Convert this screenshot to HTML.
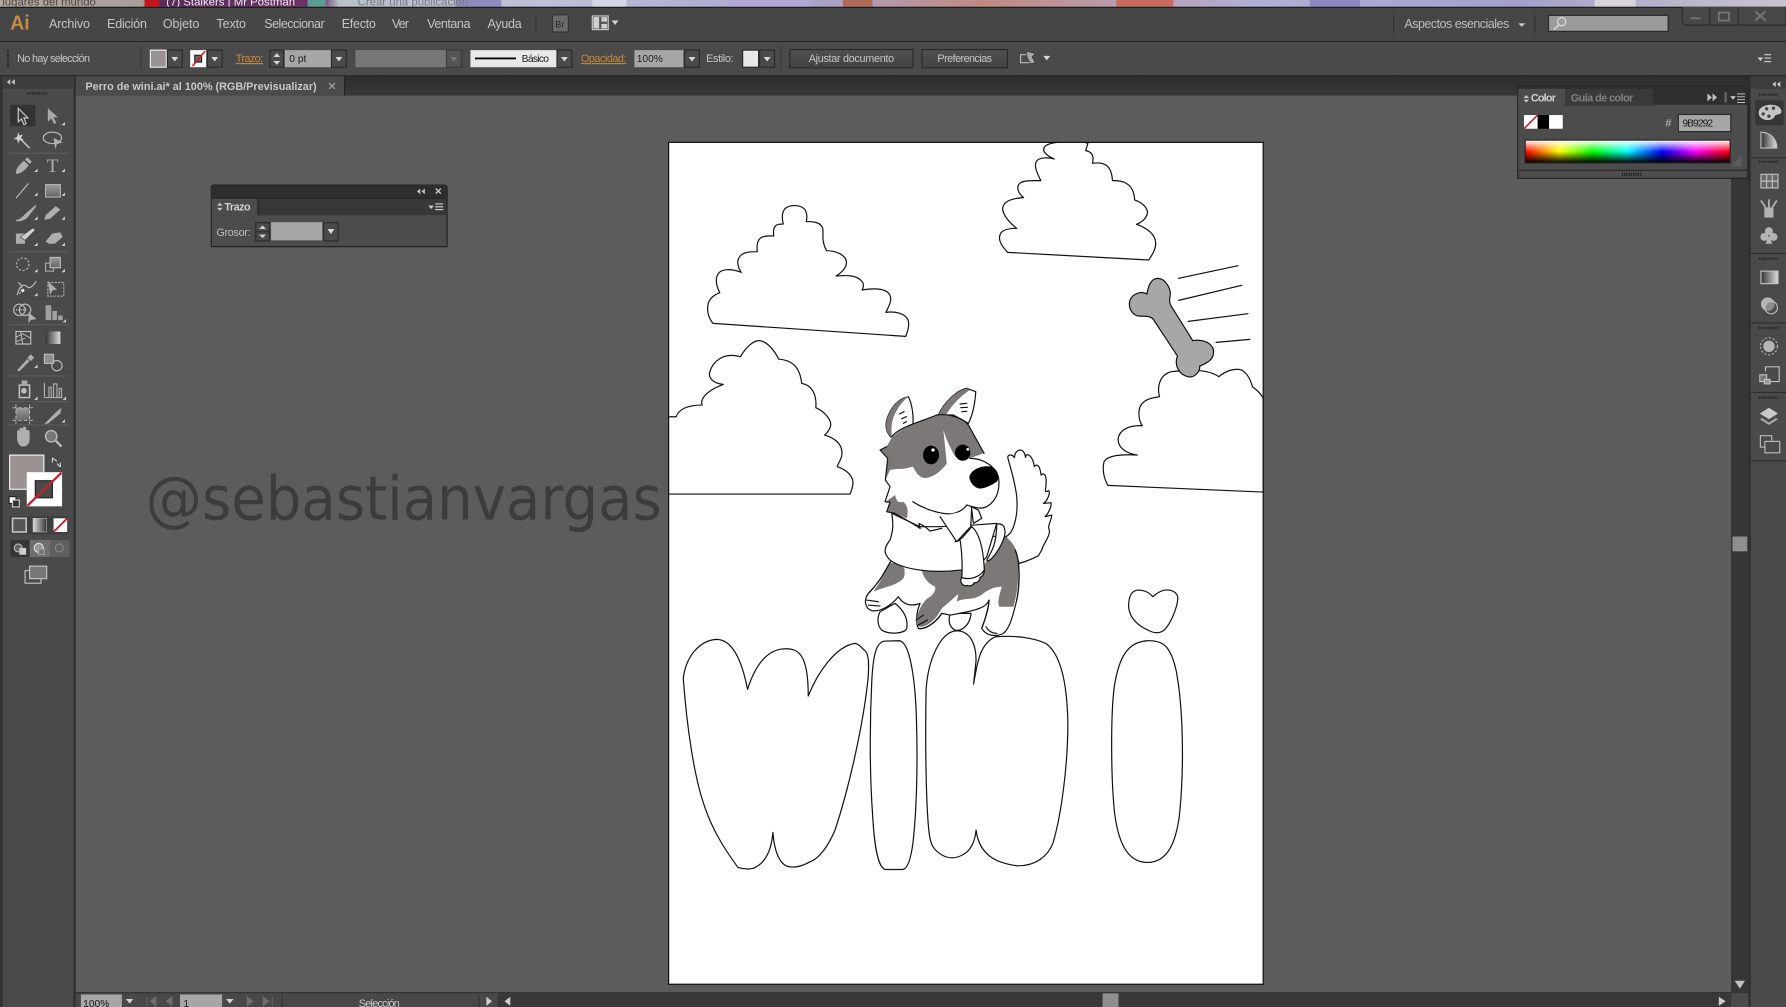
<!DOCTYPE html>
<html lang="es">
<head>
<meta charset="utf-8">
<title>Perro de wini.ai</title>
<style>
html,body{margin:0;padding:0;background:#5c5c5c;width:1786px;height:1007px;overflow:hidden}
svg{display:block}
text{font-family:"Liberation Sans","DejaVu Sans",sans-serif;fill:#c6c6c6;font-size:10px}
.m{font-size:11px;fill:#c4c4c4}
.d{fill:#1c1c1c;font-size:9px}
.o{fill:#c98a3d;font-size:9.5px;text-decoration:underline dotted}
.a path,.a ellipse,.a circle{vector-effect:non-scaling-stroke}
.ln{fill:#fff;stroke:#111;stroke-width:1.2;stroke-linejoin:round}
.wh{fill:#fff;stroke:none}
.ll{fill:none;stroke:#111;stroke-width:1.2;stroke-linecap:round;stroke-linejoin:round;vector-effect:non-scaling-stroke}
.gr{fill:#7d7878;stroke:none}
.ic{fill:none;stroke:#b4b4b4;stroke-width:1.1}
.if{fill:#aeaeae;stroke:none}
</style>
</head>
<body>
<svg xmlns="http://www.w3.org/2000/svg" width="1786" height="1007" viewBox="0 0 1568 884" preserveAspectRatio="none">
<defs>
<linearGradient id="top" x1="0" x2="1" y1="0" y2="0">
<stop offset="0" stop-color="#b3a79f"/><stop offset=".08" stop-color="#a89d9a"/><stop offset=".085" stop-color="#5b2b5d"/><stop offset=".18" stop-color="#6d3366"/><stop offset=".19" stop-color="#b7c2c8"/><stop offset=".3" stop-color="#c1bfd8"/><stop offset=".45" stop-color="#a9a4cf"/><stop offset=".55" stop-color="#c08a80"/><stop offset=".7" stop-color="#b2aed4"/><stop offset=".85" stop-color="#a5a0c8"/><stop offset="1" stop-color="#c8c4d0"/>
</linearGradient>
<linearGradient id="tabbar" x1="0" x2="0" y1="0" y2="1"><stop offset="0" stop-color="#2c2c2c"/><stop offset="1" stop-color="#383838"/></linearGradient>
<linearGradient id="btn" x1="0" x2="0" y1="0" y2="1"><stop offset="0" stop-color="#505050"/><stop offset="1" stop-color="#434343"/></linearGradient>
<linearGradient id="rain" x1="0" x2="1" y1="0" y2="0">
<stop offset="0" stop-color="#f00"/><stop offset=".17" stop-color="#ff0"/><stop offset=".33" stop-color="#0f0"/><stop offset=".5" stop-color="#0ff"/><stop offset=".67" stop-color="#00f"/><stop offset=".83" stop-color="#f0f"/><stop offset="1" stop-color="#f00"/>
</linearGradient>
<linearGradient id="shade" x1="0" x2="0" y1="0" y2="1">
<stop offset="0" stop-color="#fff"/><stop offset=".5" stop-color="#fff" stop-opacity="0"/><stop offset=".5" stop-color="#000" stop-opacity="0"/><stop offset="1" stop-color="#000"/>
</linearGradient>
<linearGradient id="gg" x1="0" x2="1" y1="0" y2="0"><stop offset="0" stop-color="#333"/><stop offset="1" stop-color="#ddd"/></linearGradient>
<linearGradient id="gv" x1="0" x2="0" y1="0" y2="1"><stop offset="0" stop-color="#9a9a9a"/><stop offset="1" stop-color="#666"/></linearGradient>
<path id="c" d="M0 0L-3 0L0-3Z" fill="#cfcfcf"/>
<g id="dd"><rect x="0" y="0" width="13" height="15" fill="#4a4a4a" stroke="#2a2a2a"/><path d="M3.5 6H9.5L6.5 10Z" fill="#d8d8d8"/></g>
<clipPath id="ab"><rect x="587" y="125" width="522" height="739"/></clipPath>
</defs>

<!-- base -->
<rect width="1568" height="884" fill="#5c5c5c"/>
<!-- browser strip -->
<rect width="1568" height="6" fill="url(#top)"/>
<rect x="127" y="0" width="13" height="6" fill="#c4161c"/>
<rect x="270" y="0" width="16" height="6" fill="#5c9a92"/>
<rect x="400" y="0" width="40" height="6" fill="#8f8cc0"/><rect x="520" y="0" width="30" height="6" fill="#d6d6e6"/>
<rect x="640" y="0" width="70" height="6" fill="#b0a6d6"/><rect x="740" y="0" width="26" height="6" fill="#b06a58"/><rect x="980" y="0" width="50" height="6" fill="#c96a60"/><rect x="1150" y="0" width="44" height="6" fill="#8d88bd"/><rect x="1400" y="0" width="36" height="6" fill="#d8d4dc"/>
<text x="2" y="5" style="font-size:10px;fill:#4d4640">lugares del mundo</text>
<text x="146" y="5" style="font-size:10px;fill:#eee">(7) Stalkers | Mr Postman</text>
<text x="314" y="5" style="font-size:10px;fill:#777a80">Crear una publicación</text>

<!-- menu bar -->
<rect y="6" width="1568" height="30" fill="#464646"/>
<rect y="6" width="1568" height="1" fill="#1d1d1d"/>
<rect y="36" width="1568" height="1" fill="#262626"/>
<text x="9" y="26" style="font-size:18px;font-weight:bold;fill:#c58c3e" textLength="17" lengthAdjust="spacingAndGlyphs">Ai</text>
<text class="m" x="43" y="24.5" textLength="36">Archivo</text>
<text class="m" x="94" y="24.5" textLength="35">Edición</text>
<text class="m" x="143" y="24.5" textLength="32">Objeto</text>
<text class="m" x="190" y="24.5" textLength="26">Texto</text>
<text class="m" x="232" y="24.5" textLength="53">Seleccionar</text>
<text class="m" x="300" y="24.5" textLength="30">Efecto</text>
<text class="m" x="344" y="24.5" textLength="15">Ver</text>
<text class="m" x="375" y="24.5" textLength="38">Ventana</text>
<text class="m" x="428" y="24.5" textLength="30">Ayuda</text>
<rect x="470" y="12" width="1" height="18" fill="#333"/>
<rect x="485" y="13" width="14" height="15" rx="1" fill="#6a6a6a" stroke="#333"/>
<text x="487.5" y="24" style="font-size:8px;fill:#2a2a2a">Br</text>
<rect x="520" y="14" width="14" height="12" fill="#555" stroke="#c8c8c8"/>
<rect x="521" y="15" width="5" height="10" fill="#cfcfcf"/><rect x="528" y="15" width="5" height="4" fill="#cfcfcf"/><rect x="528" y="21" width="5" height="4" fill="#cfcfcf"/>
<path d="M537 18H543L540 22Z" fill="#d4d4d4"/>
<rect x="1223" y="12" width="1" height="18" fill="#333"/>
<text class="m" x="1233" y="24.5" textLength="92" style="fill:#bdbdbd">Aspectos esenciales</text>
<path d="M1333 20.500H1339L1336 23.500Z" fill="#cfcfcf"/>
<rect x="1347" y="12" width="1" height="18" fill="#333"/>
<rect x="1359.500" y="13.500" width="105" height="14" fill="#9b9b9b" stroke="#2a2a2a"/>
<circle cx="1371" cy="19" r="3.600" fill="none" stroke="#e0e0e0"/><path d="M1368.500 22L1364 26" stroke="#e0e0e0" stroke-width="1.200"/>
<path d="M1477 6V18Q1477 22 1481 22H1568V6" fill="#474747" stroke="#2a2a2a"/>
<path d="M1501 6V22M1526 6V22" stroke="#2a2a2a"/>
<rect x="1484" y="15" width="9" height="2" fill="#6c6c6c"/>
<rect x="1509" y="11" width="9" height="7" fill="none" stroke="#7a7a7a" stroke-width="1.500"/>
<path d="M1541 10L1550 18M1550 10L1541 18" stroke="#707070" stroke-width="2"/>

<!-- control bar -->
<rect y="37" width="1568" height="29" fill="#4a4a4a"/>
<rect y="66" width="1568" height="1" fill="#232323"/>
<path d="M7 44V60" stroke="#222" stroke-width="2" stroke-dasharray="1 1"/>
<text x="15" y="54.500" style="font-size:9.500px" textLength="64">No hay selección</text>
<rect x="123" y="41" width="1" height="20" fill="#3b3b3b"/>
<rect x="132" y="44" width="14" height="15" fill="#9b9292" stroke="#eee"/>
<use href="#dd" x="147" y="44"/>
<rect x="167" y="44" width="14" height="15" fill="#fff"/>
<rect x="171" y="48.500" width="6" height="6" fill="#666" stroke="#222"/>
<path d="M169 58L180 45" stroke="#c8202a" stroke-width="1.400"/>
<use href="#dd" x="182" y="44"/>
<text class="o" x="207" y="54.500" textLength="24">Trazo:</text>
<rect x="237" y="44" width="12" height="15" fill="#4a4a4a" stroke="#2a2a2a"/>
<path d="M240 50L243 46.500L246 50ZM240 53.500H246L243 57Z" fill="#d4d4d4"/>
<rect x="250" y="44" width="41" height="15" fill="#a6a6a6"/>
<text class="d" x="254" y="54.500">0 pt</text>
<use href="#dd" x="291" y="44"/>
<rect x="312" y="44" width="80" height="15" fill="#777"/>
<rect x="392" y="44" width="13" height="15" fill="#555" stroke="#3a3a3a"/><path d="M395.500 50H401.500L398.500 54Z" fill="#777"/>
<rect x="413" y="44" width="76" height="15" fill="#e9e9e9"/>
<rect x="417" y="50.500" width="36" height="1.600" fill="#000"/>
<text class="d" x="458" y="54.500" textLength="24">Básico</text>
<use href="#dd" x="489" y="44"/>
<text class="o" x="510" y="54.500" textLength="40">Opacidad:</text>
<rect x="557" y="44" width="43" height="15" fill="#a6a6a6"/>
<text class="d" x="559" y="54.500">100%</text>
<use href="#dd" x="601" y="44"/>
<text x="620" y="54.500" style="font-size:9.500px" textLength="24">Estilo:</text>
<rect x="652" y="44" width="14" height="15" fill="#e8e8e8" stroke="#2a2a2a"/>
<use href="#dd" x="667" y="44"/>
<rect x="685" y="41" width="1" height="20" fill="#3b3b3b"/>
<rect x="693.500" y="43.500" width="108" height="16" fill="url(#btn)" stroke="#2a2a2a"/>
<text x="710" y="54.500" style="font-size:9.500px" textLength="75">Ajustar documento</text>
<rect x="809.500" y="43.500" width="75" height="16" fill="url(#btn)" stroke="#2a2a2a"/>
<text x="823" y="54.500" style="font-size:9.500px" textLength="48">Preferencias</text>
<path d="M896 48H904V55H896Z" fill="none" stroke="#b8b8b8"/><path d="M901 45L909 47L906 50L909 55L905 56L902 51Z" fill="#a8a8a8" stroke="#2a2a2a" stroke-width=".5"/>
<path d="M916 49H922L919 53Z" fill="#d8d8d8"/>
<path d="M1543 50.500H1548L1545.500 53.500Z" fill="#cfcfcf"/><path d="M1549 48H1555M1549 51H1555M1549 54H1555" stroke="#cfcfcf"/>

<!-- doc tab bar -->
<rect y="67" width="1568" height="17" fill="url(#tabbar)"/>
<rect x="66" y="67" width="236" height="17" fill="#4b4b4b"/>
<rect x="302" y="67" width="1" height="17" fill="#222"/>
<text x="75" y="79" style="font-size:10px;font-weight:bold;fill:#c8c8c8" textLength="203" lengthAdjust="spacingAndGlyphs">Perro de wini.ai* al 100% (RGB/Previsualizar)</text>
<path d="M289 73L294 78M294 73L289 78" stroke="#aaa" stroke-width="1"/>

<!-- canvas -->
<rect x="66" y="84" width="1454" height="788" fill="#5c5c5c"/>

<!-- watermark -->
<text x="128" y="456" style="font-family:'DejaVu Sans','Liberation Sans',sans-serif;font-size:53px;fill:#3c3c3c" textLength="453" lengthAdjust="spacingAndGlyphs">@sebastianvargas</text>

<!-- artboard -->
<rect x="587" y="125" width="522" height="739" fill="#fff"/>

<g class="a" clip-path="url(#ab)">
<g transform="translate(579.5,114.1) scale(.336,.2927)">
<path class="ln" d="M138 580C128 565 122 545 125 525C128 505 140 495 156 488C148 470 144 450 150 435C158 415 185 415 212 427C205 415 198 395 208 380C218 365 235 365 254 365C252 345 255 325 270 320C280 316 290 318 297 318C295 300 298 285 310 283L322 282C318 265 318 250 325 238C335 224 365 222 378 238C385 250 384 265 382 275C395 274 420 275 425 295C428 310 420 330 435 362C460 362 485 375 487 395C488 410 478 425 460 438C490 435 515 435 528 455C535 465 530 475 528 480C555 475 595 472 602 500C605 515 597 530 590 547C615 543 640 550 648 570C652 585 648 600 642 619Z"/>
<path class="ln" d="M908 367C895 350 880 330 890 310C897 297 915 295 932 295C915 280 895 255 895 235C897 215 915 205 950 203C935 190 930 170 940 160C950 150 975 152 995 152C985 130 975 105 985 92C992 82 1015 82 1030 87C1015 80 995 65 1005 50C1015 38 1040 36 1070 35C1090 35 1110 35 1118 40L1112 62C1125 65 1135 72 1130 100C1160 95 1180 105 1182 152C1215 150 1238 165 1240 210C1265 220 1278 240 1272 255C1268 268 1255 278 1245 283C1275 295 1295 315 1295 340C1295 360 1285 375 1277 390Z"/>
<path class="ln" d="M22 860L42 860C50 835 75 825 110 825C105 810 115 785 165 763C140 760 125 745 130 725C138 695 165 665 210 680C225 650 245 630 262 632C285 638 300 665 310 687C340 690 365 705 370 760C395 765 410 790 407 833C430 845 450 870 445 890C440 905 435 910 430 915C460 925 478 945 475 975C473 990 465 1000 463 1010C490 1020 505 1040 504 1060C503 1075 498 1085 497 1092L22 1092Z"/>
<path class="ln" d="M1170 1066C1160 1045 1155 1020 1160 995C1170 975 1210 972 1247 975C1215 970 1195 950 1197 925C1200 900 1225 885 1260 887C1250 870 1245 830 1265 815C1275 805 1290 803 1305 800C1298 770 1305 735 1335 725C1375 720 1430 715 1460 740C1475 725 1500 712 1520 720C1540 735 1545 760 1548 770C1560 780 1570 790 1576 805L1576 1086Z"/>
<path d="M1300 445C1320 445 1335 475 1333 495C1330 515 1330 520 1342 540L1392 632C1410 628 1435 632 1445 655C1450 680 1440 695 1410 708C1412 725 1395 745 1380 740C1358 735 1345 710 1350 685L1352 678L1290 570C1282 555 1265 560 1250 558C1232 555 1222 530 1228 510C1235 490 1258 482 1272 492C1275 475 1280 445 1300 445Z" fill="#a7a7a7" stroke="#111" stroke-width="1.200"/>
<path class="ll" d="M1355 445L1510 407M1355 511L1520 466M1380 574L1536 551M1453 637L1541 628"/>
</g>

<g transform="translate(579.5,509.2) scale(.3135,.2927)">
<path class="ln" d="M218 862C190 820 150 760 125 680C95 590 75 440 65 295C72 230 110 180 160 178C200 180 228 235 245 328C262 270 290 215 340 207C390 200 415 225 415 348C440 280 490 200 545 190C560 192 565 205 572 210C585 220 585 250 583 290C570 430 530 620 490 750C470 800 445 835 420 845C395 860 375 865 355 858C335 850 320 815 316 757C312 810 295 850 260 865C245 868 230 866 218 862Z"/>
<path class="ln" d="M630 183L670 182C700 185 715 300 718 420C722 560 718 700 708 790C703 830 695 865 680 868L630 868C610 860 600 800 595 700C588 600 586 450 593 300C597 225 605 185 630 183Z"/>
<path class="ln" d="M745 330C750 240 785 155 830 152C870 152 885 195 885 240L878 312C888 250 895 190 940 170C1000 165 1050 175 1080 190C1120 220 1140 300 1142 430C1142 550 1125 700 1100 790C1085 830 1050 858 1000 857C955 850 895 835 885 750C882 780 875 800 860 815C840 832 815 840 790 825C770 812 760 800 755 770C745 700 742 500 745 330Z"/>
<path class="ln" d="M1365 182C1410 180 1430 200 1445 270C1465 380 1468 560 1455 700C1445 790 1420 847 1365 847C1315 847 1285 800 1273 700C1262 590 1262 400 1272 320C1285 230 1310 185 1365 182Z"/>
<path class="ln" d="M1380 50C1395 35 1410 28 1425 30C1440 32 1450 42 1450 55C1448 85 1430 130 1412 150C1400 160 1385 160 1370 152C1340 138 1315 115 1312 80C1312 50 1320 30 1340 30C1355 30 1370 38 1380 50Z"/>
</g>

<!-- dog -->
<g transform="translate(737.5,324.8) scale(.2927)">
<!-- tail -->
<path class="ln" d="M497 500C520 490 535 440 530 380C525 335 510 290 503 262C505 250 518 255 523 262C525 240 545 232 553 250C558 260 555 270 558 255C570 250 580 270 583 290C592 278 600 290 603 315C610 308 620 312 618 340C618 360 610 370 626 362C632 370 620 395 610 400L633 398C635 410 625 430 615 440L635 435C635 450 620 470 628 480C630 500 610 520 605 540L595 557C580 565 555 575 538 580Z"/>
<!-- back paws -->
<path class="ln" d="M165 700C190 720 205 745 200 775C195 790 150 795 125 780C110 765 112 740 120 725Z"/>
<path class="ln" d="M330 730C325 750 325 770 345 780C365 785 390 765 393 730Z"/>
<!-- body -->
<path class="ln" d="M155 570C135 600 125 630 85 670C70 690 75 715 95 722C120 725 150 710 175 680C190 705 215 710 240 700C230 725 225 755 235 775C255 780 290 755 305 730L330 735C420 720 440 710 447 690C445 725 430 760 425 775C440 800 470 800 490 790C510 775 520 730 530 690C540 640 540 570 525 540C510 510 495 500 480 495Z"/>
<path class="gr" d="M150 580C135 605 125 630 100 665C130 650 165 650 190 625C198 610 190 595 195 600L180 575Z"/>
<path class="gr" d="M245 600C250 625 265 640 285 650C290 665 270 680 270 680C250 690 235 720 228 750C230 770 240 775 260 765C280 755 295 735 305 715C330 695 345 680 355 672L350 695C375 680 400 695 430 670C455 650 480 650 485 650C480 670 470 695 478 710L520 710C535 660 540 590 528 540C515 510 500 500 480 498L430 590L360 600Z"/>
<path class="ll" d="M530 690C540 640 540 570 525 540M228 750L250 735M235 765L262 750M80 690L115 695M85 705L120 708M438 770C445 785 460 790 470 790M447 690C445 725 430 760 425 775M305 730C285 760 255 780 235 775M155 570C135 600 125 630 85 670"/>
<!-- chest -->
<path class="ln" d="M155 430C160 460 160 480 150 510C130 535 130 550 150 570C190 600 280 610 360 600L405 600L440 560L470 460L400 465L300 470L240 470Z"/>
<!-- right frill -->
<path class="ln" d="M440 570C455 545 470 520 470 462C485 460 495 465 495 490C490 520 465 560 445 573Z"/>
<!-- scarf -->
<path class="ln" d="M345 515L365 505L395 470C420 490 430 540 433 600C420 620 390 640 365 625C368 590 365 540 360 510Z"/>
<path class="ln" d="M362 630C362 642 372 650 382 646C388 650 400 646 402 638C410 640 420 632 420 622C428 620 433 610 433 600C420 620 390 632 365 622Z"/>
<!-- ears -->
<path class="ln" d="M155 203C140 190 135 170 140 150C150 115 175 85 205 80C215 100 222 135 218 170C205 170 190 180 175 200C170 205 160 205 155 203Z"/>
<path class="gr" d="M155 203C140 190 135 170 140 150C150 115 175 85 205 80C185 95 165 125 158 150C152 170 155 190 155 203Z"/>
<path class="ln" d="M295 135C310 100 350 60 380 55L407 65C405 100 400 130 385 160L340 135Z"/>
<path class="gr" d="M295 135C310 100 350 60 380 55L390 60C365 75 335 105 318 135Z"/>
<path class="ll" d="M178 132L192 125M185 146L199 140M190 160L199 155M360 102L380 100M362 113L382 112M365 125L380 124"/>
<!-- head -->
<path class="wh" d="M155 200C180 170 230 160 290 135C330 130 370 145 385 165L432 250L390 265C420 265 460 280 475 320C480 350 475 390 440 410C420 420 400 410 380 405C360 425 320 435 290 425L220 395L205 440L165 430L140 425L150 395L135 395L150 350L135 330L145 265L120 240L140 230Z"/>
<path class="gr" d="M155 203C190 170 240 150 292 135C330 130 370 145 385 165L430 250L388 265C360 270 350 260 345 260C335 240 320 215 310 180C315 230 320 275 320 280C300 310 265 330 245 322C230 315 225 300 218 290C190 300 170 295 150 300L136 330L145 265L122 240L140 230Z"/>
<path class="gr" d="M137 395L165 375C170 395 175 400 190 395C205 410 205 425 200 445L165 430L142 425L150 397Z"/>
<path class="ll" d="M155 200C180 170 230 160 290 135C330 130 370 145 385 165L432 250M390 265C420 265 460 280 475 320C480 350 475 390 440 410C420 420 400 410 380 405M140 230L120 240L143 265L136 330L150 350L135 395L150 397L140 425L165 430"/>
<path class="ll" d="M218 395C250 415 290 430 330 432C350 430 370 420 380 405"/>
<!-- bib under chin -->
<path class="wh" d="M300 436L350 515L392 470L395 410C370 425 335 435 300 436Z"/>
<path class="ll" d="M300 440L350 515L392 470L395 410"/>
<path class="ln" d="M394 410L400 460L425 445L415 420Z"/>
<path class="ll" d="M165 430C200 450 225 465 240 475L237 460L255 470L270 483L305 475"/>
<!-- eyes and nose -->
<ellipse cx="273" cy="255" rx="24" ry="28" fill="#000"/>
<ellipse cx="368" cy="248" rx="23" ry="24" fill="#000"/>
<circle cx="279" cy="240" r="5" fill="#fff"/>
<circle cx="383" cy="238" r="4" fill="#fff"/>
<path d="M388 320C395 295 430 285 455 290C475 300 480 325 470 335C455 345 430 358 415 355C400 350 388 335 388 320Z" fill="#000"/>
</g>
</g>
<rect x="587" y="125" width="522" height="739" fill="none" stroke="#0a0a0a" stroke-width="1"/>

<!-- left tools -->
<rect x="0" y="67" width="65" height="817" fill="#4a4a4a"/>
<rect x="0" y="67" width="2.500" height="817" fill="#333"/>
<rect x="64.500" y="67" width="2" height="817" fill="#2e2e2e"/>
<rect x="3" y="67" width="61" height="11" fill="#3d3d3d"/>
<path d="M6 72L9 69.500V74.500ZM10 72L13 69.500V74.500Z" fill="#c8c8c8"/>
<path d="M24 82H42" stroke="#222" stroke-width="2" stroke-dasharray="1 1"/>
<path d="M8 134.500H60M8 221H60M8 285H60M8 330H60M8 352.500H60M8 373H60" stroke="#5c5c5c" stroke-width="1"/>
<rect x="9" y="92" width="22" height="19" fill="#333"/>
<!-- row 1 -->
<path d="M16 95V107L18.800 104.500L21 109.500L23 108.500L21 103.500L24.500 103.500Z" fill="#3a3a3a" stroke="#cfcfcf"/>
<path d="M42 95V107L45 104L47.500 109L49.500 108L47 103H51Z" fill="#a8a8a8"/>
<use href="#c" x="57" y="110"/>
<!-- row 2 -->
<path d="M18 122L26 130" stroke="#b8b8b8" stroke-width="1.500"/><path d="M16 116L17 119L20 118L18.500 121L21 123L17.500 122.500L16 126L15 122.500L12 122L15 120Z" fill="#cfcfcf"/>
<ellipse cx="46" cy="121" rx="8" ry="5" class="ic"/><path d="M47 121L55 125L50 126.500L48.500 131Z" fill="#aeaeae"/>
<!-- row 3 -->
<path d="M14 152C14 147 18 144 21 141L25 145C23 149 20 151 15 153ZM22 140L24 138L28 142L26 144Z" class="if"/><use href="#c" x="33" y="151"/>
<text x="41" y="151" style="font-family:'Liberation Serif',serif;font-size:17px;fill:#b0b0b0">T</text><use href="#c" x="57" y="151"/>
<!-- row 4 -->
<path d="M14 174L25 161" stroke="#bcbcbc" stroke-width="1"/><use href="#c" x="33" y="172"/>
<rect x="40" y="162" width="13" height="11" fill="url(#gv)" stroke="#b0b0b0"/><use href="#c" x="57" y="172"/>
<!-- row 5 -->
<path d="M14 193C17 193 19 191 21 189L31 180L32 181L24 191C22 193 18 195 14 194Z" class="if"/><use href="#c" x="33" y="193"/>
<path d="M39 193L40 189L49 181L53 184L44 192Z" class="if"/><use href="#c" x="57" y="193"/>
<!-- row 6 -->
<path d="M14 205H22V214H14Z" class="if"/><path d="M18 208L29 200L31 202L22 211Z" fill="#cfcfcf" stroke="#333" stroke-width=".5"/>
<path d="M40 212L46 205L53 204L55 208L48 214H43Z" class="if"/><use href="#c" x="57" y="216"/><use href="#c" x="33" y="216"/>
<!-- row 7 -->
<circle cx="20" cy="232" r="5.500" fill="none" stroke="#aaa" stroke-width="1.100" stroke-dasharray="2 1.400"/><use href="#c" x="33" y="239"/>
<rect x="40" y="231" width="7" height="7" fill="none" stroke="#aaa"/><rect x="44" y="226" width="9" height="9" fill="url(#gv)" stroke="#bbb"/><use href="#c" x="57" y="239"/>
<!-- row 8 -->
<path d="M15 259C17 252 20 248 24 252C27 254 30 249 32 247M16 248C20 250 20 254 17 258" class="ic"/><circle cx="20" cy="255" r="2" fill="#ddd" stroke="#444"/><use href="#c" x="33" y="260"/>
<rect x="42" y="248" width="14" height="12" fill="none" stroke="#aaa" stroke-dasharray="2 1"/><path d="M42 247L50 254L46 255L44 259Z" class="if"/>
<!-- row 9 -->
<circle cx="17" cy="272" r="5" class="ic"/><circle cx="22" cy="272" r="5" class="ic"/><path d="M14 272H24" stroke="#ddd" stroke-dasharray="1 1"/><path d="M25 274L32 280L27 281L25 284Z" class="if"/>
<path d="M40 268H45V281H40ZM46 273H50V281H46ZM51 277H55V281H51Z" fill="#a0a0a0"/><use href="#c" x="58" y="283"/>
<!-- row 10 -->
<rect x="14" y="291" width="13" height="11" fill="none" stroke="#c0c0c0"/><path d="M14 296L20 293L27 297M18 291L20 302M14 300L22 297" stroke="#c0c0c0" fill="none" stroke-width=".8"/>
<rect x="40" y="291" width="13" height="11" fill="url(#gg)"/>
<!-- row 11 -->
<path d="M15 325L24 315L26 317L17 326ZM24 314L27 311L30 314L27 317Z" class="if"/><use href="#c" x="33" y="323"/>
<rect x="39" y="311" width="8" height="8" fill="#8f8f8f" stroke="#bbb"/><circle cx="50" cy="321" r="4.500" class="ic"/>
<!-- row 12 -->
<rect x="17" y="338" width="9" height="11" fill="none" stroke="#c0c0c0" stroke-width="1.300"/><rect x="19" y="334" width="5" height="4" fill="#aaa"/><circle cx="21" cy="343" r="2.500" fill="#bbb"/><use href="#c" x="33" y="351"/>
<path d="M39 349V336M43 349V340H45V349M47 349V337H50V349M52 349V341H54V349M39 349H55" fill="none" stroke="#adadad"/><use href="#c" x="58" y="351"/>
<!-- row 13 -->
<rect x="14" y="358" width="12" height="11" fill="url(#gv)"/><path d="M11 358H29M11 369H29M14 355V372M26 355V372" stroke="#c4c4c4" stroke-width=".8" stroke-dasharray="3 2"/>
<path d="M39 372L50 361L54 358L53 363L42 372Z" class="if"/><use href="#c" x="57" y="371"/>
<!-- row 14 -->
<path d="M15 386V379C15 377 17 377 17 379V377C17 375 20 375 20 377V376C20 374 23 374 23 376V378C23 377 26 377 26 379V386C26 390 23 392 20 392C18 392 16 390 15 386Z" fill="#b0b0b0"/>
<circle cx="45" cy="383" r="5" fill="#777" stroke="#bcbcbc" stroke-width="1.200"/><path d="M49 387L54 392" stroke="#bcbcbc" stroke-width="2"/>
<!-- fill/stroke -->
<rect x="8.500" y="399.500" width="30" height="30" fill="#9b9292" stroke="#f4f4f4" stroke-width="1"/>
<rect x="23.500" y="414.500" width="31" height="30" fill="#fff"/>
<rect x="31" y="422" width="15" height="15" fill="#4a4a4a" stroke="#222"/>
<path d="M24 444L54 415" stroke="#c8202a" stroke-width="2"/>
<path d="M46 402L50 405M53 410L50 407M46 402V406M53 410V406" stroke="#d0d0d0" fill="none"/>
<rect x="8" y="436" width="6" height="6" fill="#fff" stroke="#222"/><rect x="11" y="439" width="6" height="6" fill="#333" stroke="#ccc"/>
<!-- color/gradient/none -->
<rect x="8" y="453" width="52" height="16" fill="#3e3e3e"/>
<rect x="11" y="455" width="12" height="12" fill="#555" stroke="#c4c4c4" stroke-width="1.400"/>
<rect x="29" y="455" width="12" height="12" fill="url(#gg)" transform="rotate(180 35 461)" stroke="#bbb" stroke-width=".5"/>
<rect x="47" y="455" width="12" height="12" fill="#fff"/><path d="M47 467L59 455" stroke="#c8202a" stroke-width="1.600"/>
<!-- draw modes -->
<rect x="9" y="474" width="17" height="15" fill="#353535"/><rect x="26" y="474" width="18" height="15" fill="#6e6e6e"/><rect x="44" y="474" width="17" height="15" fill="#5f5f5f"/>
<circle cx="16" cy="481" r="3.500" fill="#666" stroke="#bbb"/><rect x="17" y="481" width="6" height="6" fill="#ccc"/>
<circle cx="34" cy="481" r="4" fill="#999" stroke="#ddd"/><rect x="34" y="482" width="5" height="5" fill="#777" stroke="#bbb" stroke-width=".5"/>
<circle cx="52" cy="481" r="3.500" fill="none" stroke="#888"/>
<!-- screen mode -->
<rect x="26" y="497" width="15" height="11" fill="#777" stroke="#c4c4c4"/>
<path d="M26 501H22V512H36V508" fill="none" stroke="#c4c4c4"/>

<!-- right scrollbar -->
<rect x="1520" y="84" width="15" height="788" fill="#363636"/>
<rect x="1520" y="84" width="1" height="788" fill="#2f2f2f"/>
<rect x="1521" y="471" width="13" height="13" fill="#8f8f8f"/>
<path d="M1523 861H1532L1527.500 868Z" fill="#c0c0c0"/>
<rect x="1520" y="872" width="16" height="12" fill="#4a4a4a"/>

<!-- right dock -->
<rect x="1535" y="67" width="33" height="817" fill="#4a4a4a"/>
<rect x="1535" y="67" width="2" height="817" fill="#2e2e2e"/>
<rect x="1537" y="67" width="31" height="11" fill="#3d3d3d"/>
<path d="M1556 74L1559 71.500V76.500ZM1560 74L1563 71.500V76.500Z" fill="#c8c8c8"/>
<path d="M1544 83H1562M1544 142H1562M1544 227H1562M1544 288H1562M1544 349H1562" stroke="#222" stroke-width="2" stroke-dasharray="1 1"/>
<path d="M1537 138.500H1568M1537 222.500H1568M1537 283.500H1568M1537 344.500H1568M1537 404.500H1568" stroke="#2c2c2c"/>
<rect x="1541" y="88" width="25" height="22" rx="2" fill="#363636"/>
<path d="M1544 99C1544 94 1550 92 1555 92C1561 92 1564 95 1564 98C1564 101 1559 100 1558 102C1557 105 1553 106 1549 105C1546 104 1544 102 1544 99Z" fill="#c4c4c4"/>
<circle cx="1551" cy="95.500" r="1.500" fill="#444"/><circle cx="1557" cy="95" r="1.500" fill="#444"/><circle cx="1548" cy="100" r="1.500" fill="#444"/><circle cx="1553" cy="102" r="1.500" fill="#444"/>
<path d="M1546 116V130H1560C1560 122 1554 116 1546 116Z" fill="url(#gg)" stroke="#c0c0c0"/>
<path d="M1546 153H1561V165H1546Z" fill="#666" stroke="#c0c0c0"/><path d="M1546 159H1561M1551 153V165M1556 153V165" stroke="#c0c0c0"/>
<rect x="1549" y="182" width="8" height="9" fill="#b4b4b4"/><path d="M1553 182V175M1550 182L1546 176M1556 182L1560 176" stroke="#b4b4b4" stroke-width="1.500"/>
<circle cx="1553" cy="203" r="3.500" fill="#b4b4b4"/><circle cx="1549" cy="208" r="3.500" fill="#b4b4b4"/><circle cx="1557" cy="208" r="3.500" fill="#b4b4b4"/><path d="M1553 207L1550 214H1556Z" fill="#b4b4b4"/>
<rect x="1546" y="238" width="15" height="11" fill="url(#gg)" stroke="#c0c0c0"/>
<circle cx="1552" cy="267" r="6" fill="#b4b4b4"/><circle cx="1555" cy="270" r="5.500" fill="#555" fill-opacity=".4" stroke="#c0c0c0"/>
<circle cx="1553" cy="304" r="7.500" fill="none" stroke="#aaa" stroke-dasharray="2 1.500"/><circle cx="1553" cy="304" r="5" fill="#b4b4b4"/>
<path d="M1550 326V322H1562V335H1553" fill="none" stroke="#c0c0c0"/><rect x="1545" y="329" width="6" height="6" fill="#777" stroke="#c0c0c0"/><rect x="1549" y="333" width="5" height="4" fill="#999" stroke="#c0c0c0"/>
<path d="M1553 358L1561 363L1553 368L1545 363Z" fill="#c8c8c8"/><path d="M1547 367L1553 371L1559 367L1561 368L1553 373L1545 368Z" fill="#aaa"/>
<rect x="1545.500" y="382.500" width="10" height="10" fill="none" stroke="#bbb"/><rect x="1549.500" y="387.500" width="13" height="10" fill="#4a4a4a" stroke="#bbb"/>

<!-- color panel -->
<rect x="1332.500" y="75.500" width="202" height="81" fill="#4c4c4c" stroke="#222"/>
<rect x="1333" y="76" width="201" height="16" fill="#2f2f2f"/>
<rect x="1333" y="78" width="41" height="15" fill="#4c4c4c"/>
<rect x="1374" y="78" width="77" height="15" fill="#3a3a3a"/>
<path d="M1340 83.500L1337.500 86H1342.500ZM1340 90L1337.500 87.500H1342.500Z" fill="#c8c8c8"/>
<text x="1344" y="89" style="font-size:9.500px;font-weight:bold;fill:#d0d0d0" textLength="22">Color</text>
<text x="1379" y="89" style="font-size:9.500px;font-weight:bold;fill:#808080" textLength="55">Guía de color</text>
<path d="M1499 82L1503 85.500L1499 89ZM1503.500 82L1507.500 85.500L1503.500 89Z" fill="#c0c0c0"/>
<path d="M1515 81V90" stroke="#6a6a6a" stroke-width="2"/>
<path d="M1519 84.500H1524L1521.500 87.500Z" fill="#cfcfcf"/><path d="M1525 82.500H1532M1525 85H1532M1525 87.500H1532M1525 90H1532" stroke="#cfcfcf" stroke-width=".8"/>
<rect x="1338" y="101" width="12" height="12" fill="#fff"/><path d="M1338 113L1350 101" stroke="#c8202a" stroke-width="1.400"/>
<rect x="1350" y="101" width="10" height="12" fill="#000"/>
<rect x="1360" y="101" width="12" height="12" fill="#fff"/>
<text x="1462" y="111" style="font-size:10px;font-weight:bold;fill:#aaa">#</text>
<rect x="1473.500" y="100.500" width="46" height="15" fill="#a6a6a6" stroke="#2a2a2a"/>
<text class="d" x="1477" y="111" textLength="27">9B9292</text>
<rect x="1339" y="123" width="180" height="20" fill="url(#rain)"/>
<rect x="1339" y="123" width="180" height="20" fill="url(#shade)"/>
<rect x="1339" y="123" width="180" height="20" fill="none" stroke="#222"/>
<path d="M1519 146L1529 146L1529 136Z" fill="#666" fill-opacity=".6"/>
<rect x="1333" y="149" width="201" height="1" fill="#2a2a2a"/>
<path d="M1424 153H1442" stroke="#222" stroke-width="3" stroke-dasharray="1 1"/>

<!-- Trazo panel -->
<path d="M185.500 165Q185.500 162.500 188 162.500H390Q392.500 162.500 392.500 165V216.500H185.500Z" fill="#4c4c4c" stroke="#222"/>
<rect x="186" y="163" width="206" height="11" fill="#2e2e2e"/>
<rect x="186" y="174" width="206" height="15" fill="#383838"/>
<rect x="186" y="174" width="40" height="15" fill="#4c4c4c"/>
<path d="M226.500 174V189" stroke="#222"/>
<path d="M186 174H392" stroke="#1f1f1f" stroke-width=".8"/>
<path d="M370 168L373 165.500V170.500ZM366 168L369 165.500V170.500Z" fill="#c0c0c0"/>
<path d="M382.500 165.500L387 170M387 165.500L382.500 170" stroke="#c4c4c4" stroke-width="1.200"/>
<path d="M193 178L190.500 180.500H195.500ZM193 185L190.500 182.500H195.500Z" fill="#c8c8c8"/>
<text x="197" y="185" style="font-size:9.500px;font-weight:bold;fill:#d0d0d0" textLength="23">Trazo</text>
<path d="M376 180.500H381L378.500 183.500Z" fill="#cfcfcf"/><path d="M382 179H389M382 181.500H389M382 184H389" stroke="#cfcfcf"/>
<text x="190" y="207" style="font-size:9.500px;fill:#bcbcbc" textLength="30">Grosor:</text>
<rect x="224.500" y="195.500" width="12" height="16" fill="#4a4a4a" stroke="#2a2a2a"/>
<path d="M224.500 203.500H236.500" stroke="#2a2a2a"/>
<path d="M227.500 201L230.500 198L233.500 201ZM227.500 206H233.500L230.500 209Z" fill="#d4d4d4"/>
<rect x="238" y="195" width="45" height="16" fill="#a6a6a6"/>
<rect x="284" y="195.500" width="13" height="16" fill="#4a4a4a" stroke="#2a2a2a"/>
<path d="M287.500 201H293.500L290.500 205.500Z" fill="#d8d8d8"/>

<!-- bottom bar -->
<rect x="66.500" y="872" width="1453.500" height="12" fill="#383838"/>
<rect x="66.500" y="871" width="1453.500" height="1" fill="#2b2b2b"/>
<rect x="66.500" y="872" width="371.500" height="12" fill="#484848"/>
<rect x="71" y="873" width="36" height="11" fill="#a6a6a6"/>
<text class="d" x="73" y="884" textLength="23">100%</text>
<rect x="108" y="873" width="12" height="11" fill="#4a4a4a"/><path d="M110.500 877H117L113.800 881Z" fill="#d4d4d4"/>
<path d="M129 875V883M137 875L132 879L137 883ZM151 875L146 879L151 883Z" fill="#6e6e6e" stroke="#6e6e6e" stroke-width=".6"/>
<rect x="158" y="873" width="37" height="11" fill="#a6a6a6"/>
<text class="d" x="161" y="884">1</text>
<rect x="196" y="873" width="12" height="11" fill="#4a4a4a"/><path d="M198.500 877H205L201.800 881Z" fill="#d4d4d4"/>
<path d="M217 875L222 879L217 883ZM231 875L236 879L231 883ZM239 875V883" fill="#6e6e6e" stroke="#6e6e6e" stroke-width=".6"/>
<path d="M247.500 873V884M420.500 873V884M437.500 873V884" stroke="#333"/>
<text x="315" y="884" style="font-size:9.500px;fill:#c8c8c8" textLength="36">Selección</text>
<path d="M427 875L432 879L427 883Z" fill="#cfcfcf"/>
<path d="M448 875L443 879L448 883Z" fill="#cfcfcf"/>
<rect x="968" y="872" width="14" height="12" fill="#8e8e8e"/>
<path d="M1509 875L1515 879L1509 883Z" fill="#cfcfcf"/>
</svg>
</body>
</html>
